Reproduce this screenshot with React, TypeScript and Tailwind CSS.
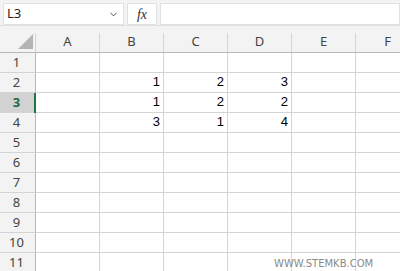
import { ChevronDown } from "lucide-react";

const cols = ["A", "B", "C", "D", "E", "F"];
const data: Record<number, (number | null)[]> = {
  2: [null, 1, 2, 3, null, null],
  3: [null, 1, 2, 2, null, null],
  4: [null, 3, 1, 4, null, null],
};
const rows = [1, 2, 3, 4, 5, 6, 7, 8, 9, 10, 11];

export default function App() {
  return (
    <div className="relative h-[271px] w-[400px] overflow-hidden bg-white font-['Noto_Sans',sans-serif]">
      {/* formula bar */}
      <div className="flex h-[26px] items-start gap-[3px] border-b border-[#e1e1e1] bg-[#f3f3f3] pl-[3px] pt-[3px]">
        <div className="flex h-[22px] w-[121px] items-center justify-between border border-[#e1e1e1] bg-white pl-[3px] pr-[4px] text-[13px] text-[#222]">
          <span>L3</span>
          <ChevronDown size={11} strokeWidth={2} className="text-[#444]" />
        </div>
        <div className="flex h-[22px] w-[30px] items-center justify-center border border-[#e1e1e1] bg-white font-['Liberation_Serif',serif] text-[14px] italic text-[#333]">
          fx
        </div>
        <div className="h-[22px] flex-1 border border-[#e1e1e1] bg-white" />
      </div>

      {/* column header */}
      <div className="flex h-[27px] items-end border-b border-[#b8b8b8] bg-[#f3f3f3]">
        <div className="flex h-[19px] w-[36px] shrink-0 items-start justify-end border-r border-[#d4d4d4] pr-[2px] pt-[1px]">
          <svg width="15" height="15" viewBox="0 0 15 15">
            <polygon points="15,0 15,15 0,15" fill="#b4b4b4" />
          </svg>
        </div>
        {cols.map((c) => (
          <div
            key={c}
            className="flex h-[19px] w-[64px] shrink-0 items-center justify-center border-r border-[#d4d4d4] pb-[2px] text-[13px] text-[#444]"
          >
            {c}
          </div>
        ))}
      </div>

      {/* grid */}
      {rows.map((r) => {
        const sel = r === 3;
        return (
          <div key={r} className="flex h-[20px]">
            <div
              className={
                sel
                  ? "relative flex w-[36px] shrink-0 items-center justify-center border-r border-b border-r-[#b8b8b8] border-b-[#d4d4d4] bg-[#d2d2d2] pr-[2px] text-[13px] font-bold text-[#1e6b41]"
                  : "flex w-[36px] shrink-0 items-center justify-center border-r border-b border-r-[#b8b8b8] border-b-[#d4d4d4] bg-[#f3f3f3] pr-[2px] text-[13px] text-[#444]"
              }
            >
              {r}
              {sel && <span className="absolute right-[-1px] top-0 h-[20px] w-[2px] bg-[#217346]" />}
            </div>
            {cols.map((c, i) => {
              const v = data[r]?.[i];
              return (
                <div
                  key={c}
                  className="flex w-[64px] shrink-0 items-end justify-end border-r border-b border-[#d4d4d4] pb-[2px] pr-[3px] font-['Liberation_Sans',sans-serif] text-[13px] leading-[16px] text-black"
                >
                  {v ?? ""}
                </div>
              );
            })}
          </div>
        );
      })}

      <div className="absolute left-[274px] top-[256px] font-['DejaVu_Sans',sans-serif] text-[10px] tracking-[0px] text-[#8a8a8a]">
        WWW.STEMKB.COM
      </div>
    </div>
  );
}
